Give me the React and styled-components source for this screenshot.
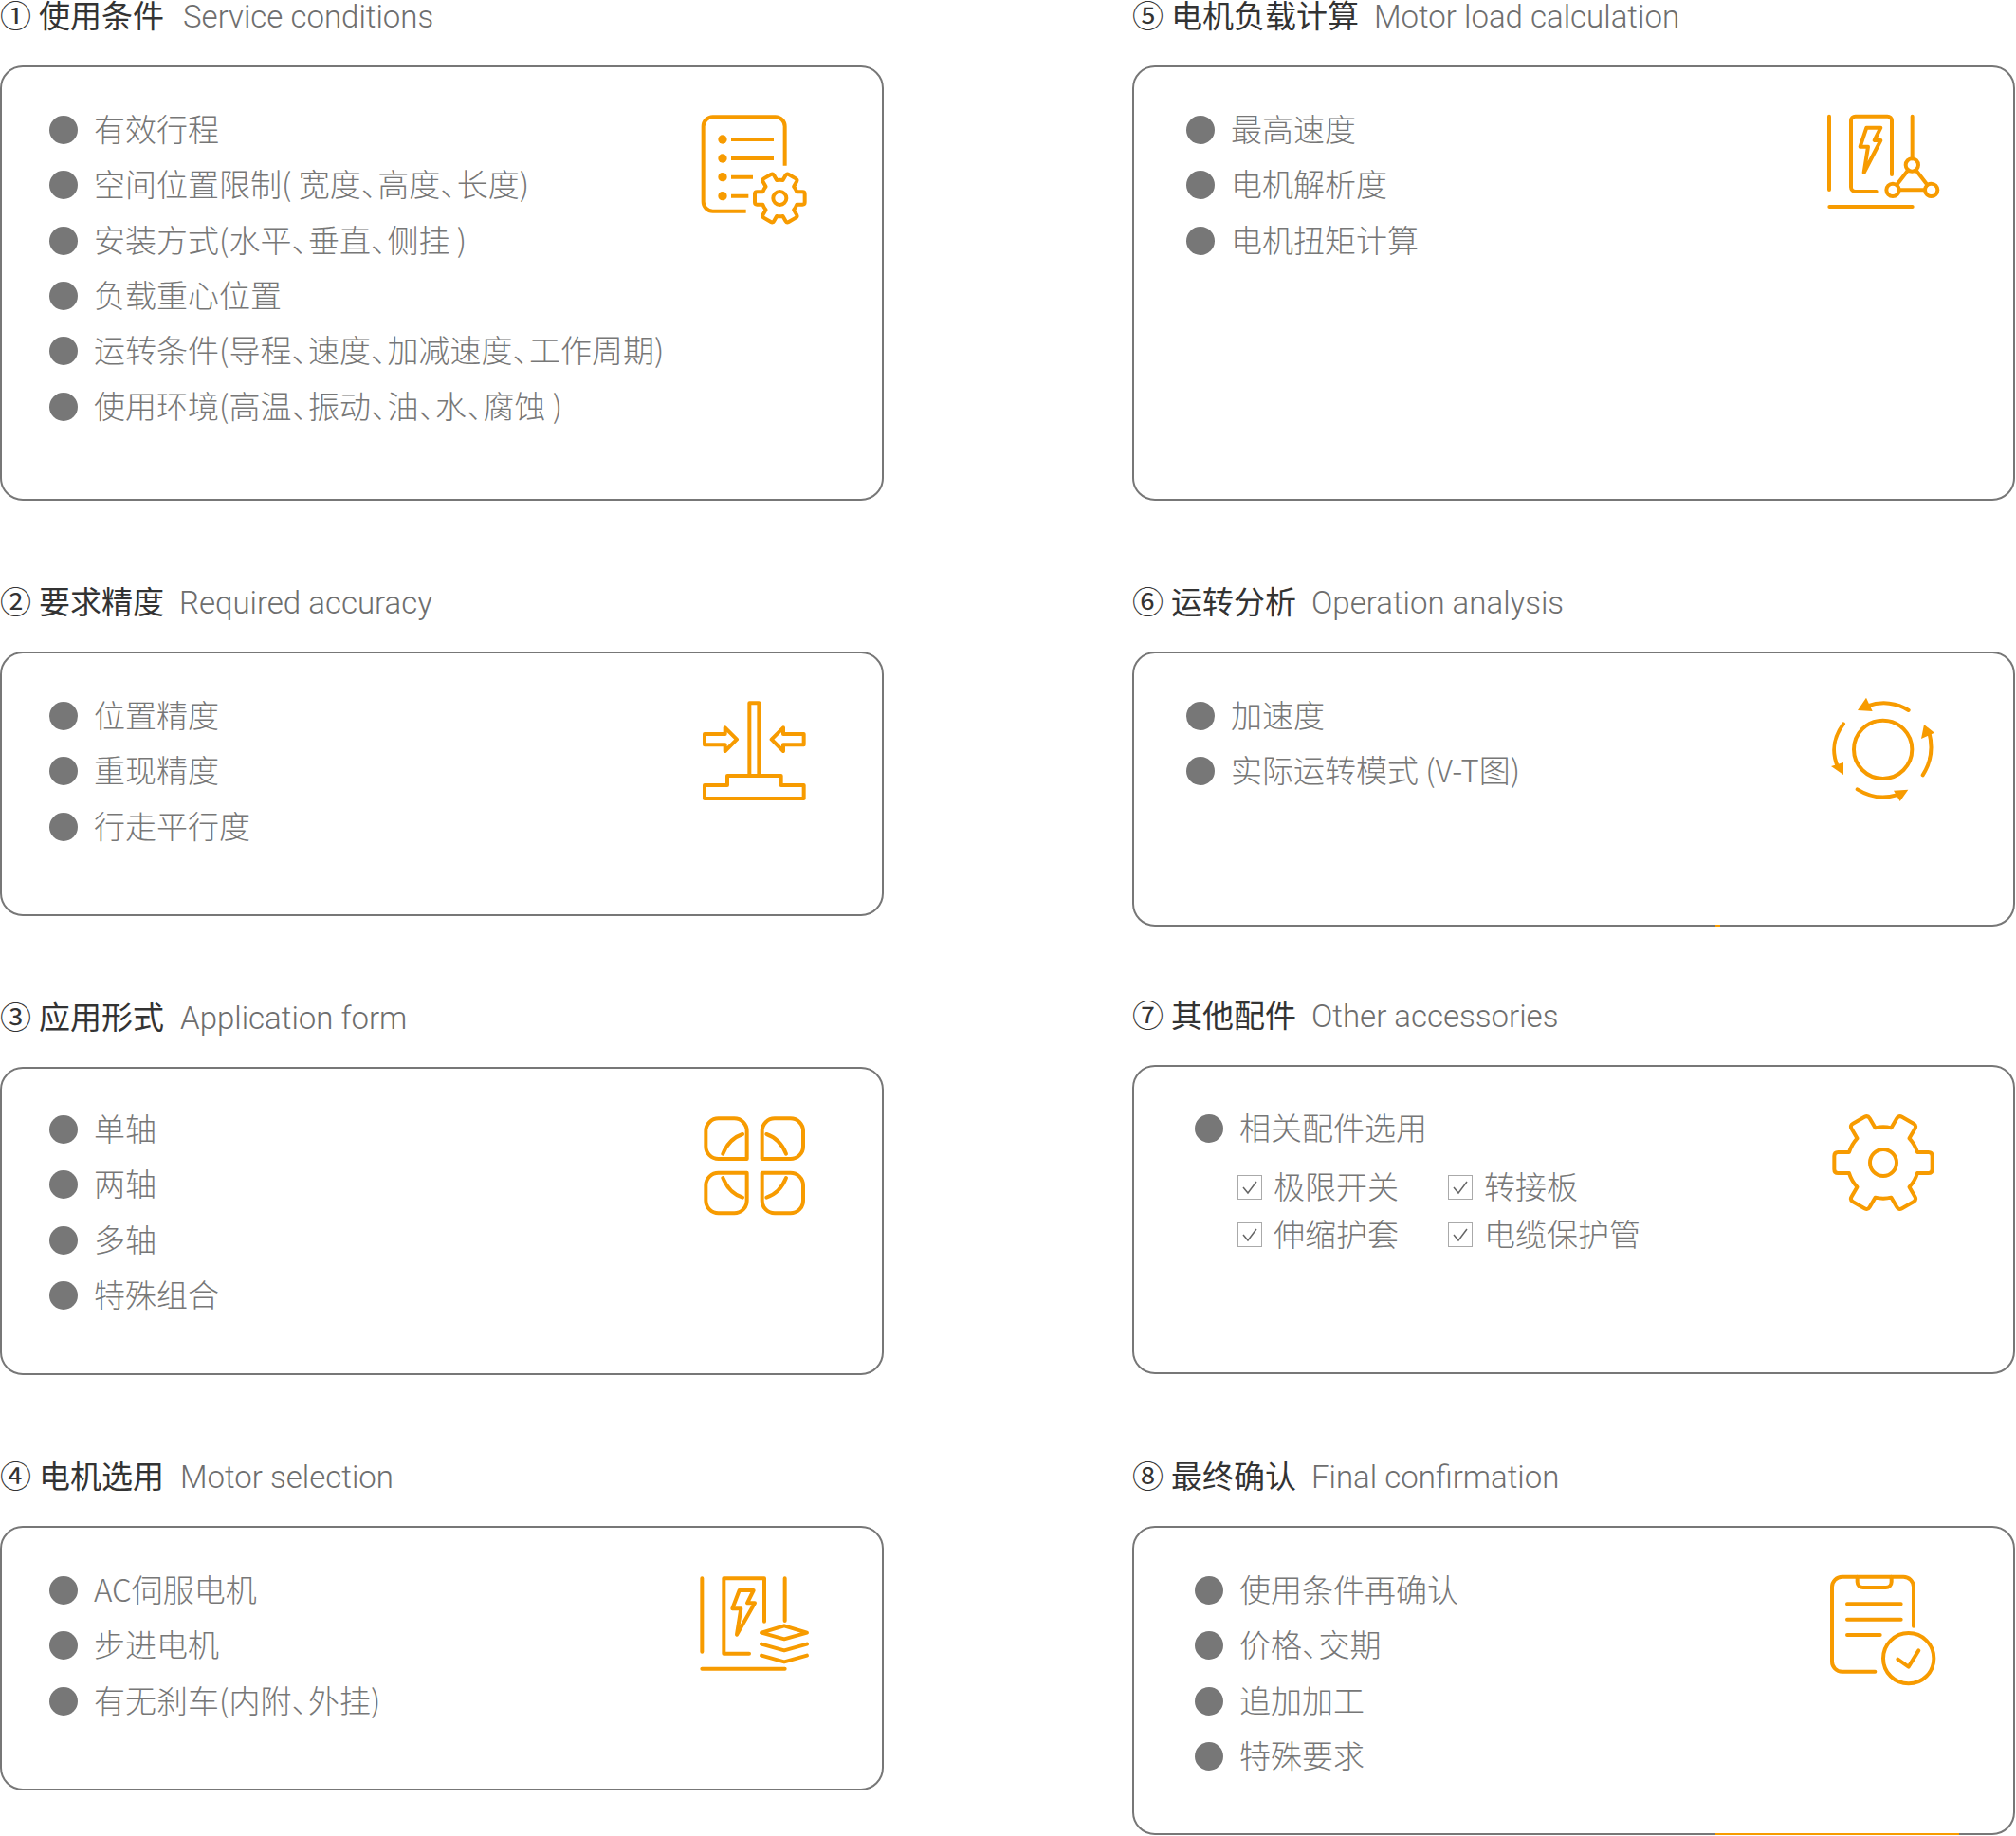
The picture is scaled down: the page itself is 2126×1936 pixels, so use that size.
import React from 'react';
import styled, { createGlobalStyle } from 'styled-components';

const ORANGE = '#f79b00';

const GlobalStyle = createGlobalStyle`
  html, body {
    margin: 0;
    padding: 0;
    background: #fff;
  }
  body {
    font-family: "Noto Sans CJK SC", "Noto Sans", sans-serif;
  }
`;

const Page = styled.div`
  width: 2126px;
  height: 1936px;
  overflow: hidden;
  display: grid;
  grid-template-columns: 932px 931px;
  column-gap: 262px;
  align-content: start;
`;

const Column = styled.div`
  display: flex;
  flex-direction: column;
`;

const Section = styled.section`
  margin-top: ${(props) => props.$gap || 0}px;
`;

const Title = styled.h2`
  display: flex;
  align-items: center;
  height: 32px;
  margin: 0 0 37px;
  font-weight: 400;
  font-size: 33px;
  white-space: nowrap;
`;

const Num = styled.span`
  width: 41px;
  flex: none;
  margin-top: -3px;
  color: #333;
`;

const Zh = styled.span`
  margin-top: -3px;
  color: #333;
`;

const En = styled.span`
  margin: 2px 0 0 ${(props) => props.$gap || 16}px;
  color: #6e6e6e;
  font-family: Roboto, sans-serif;
  font-weight: 300;
  font-size: 33px;
`;

const Card = styled.div`
  position: relative;
  display: flex;
  justify-content: space-between;
  align-items: flex-start;
  height: ${(props) => props.$height}px;
  box-sizing: border-box;
  border: 2px solid #777;
  border-radius: 24px;
  background: #fff;
`;

const Accent = styled.span`
  position: absolute;
  left: 613px;
  bottom: -2px;
  width: ${(props) => props.$width}px;
  height: 2px;
  background: ${ORANGE};
`;

const List = styled.ul`
  flex: 1;
  min-width: 0;
  margin: 0;
  padding: ${(props) => props.$top || 37}px 0 0 ${(props) => props.$left || 50}px;
  list-style: none;
`;

const Item = styled.li`
  display: flex;
  align-items: center;
  height: 58.3px;
  color: #777;
  font-size: 33px;
  font-weight: 300;
  white-space: nowrap;
`;

const Dot = styled.span`
  width: 30px;
  height: 30px;
  flex: none;
  margin-right: 17px;
  border-radius: 50%;
  background: #777;
`;

const ItemText = styled.span`
  margin-top: -4px;
`;

const Pause = styled.span`
  letter-spacing: -15.5px;
`;

const Checks = styled.div`
  display: grid;
  grid-template-columns: 222px auto;
  grid-auto-rows: 50px;
  margin: 8px 0 0 45px;
`;

const Check = styled.div`
  display: flex;
  align-items: center;
  gap: 12px;
  color: #777;
  font-size: 33px;
  font-weight: 300;
  white-space: nowrap;
`;

const Box = styled.span`
  display: flex;
  align-items: center;
  justify-content: center;
  width: 26px;
  height: 26px;
  flex: none;
  box-sizing: border-box;
  border: 1.5px solid #aaa;
`;

const Icon = styled.svg`
  flex: none;
  margin: ${(props) => props.$top}px ${(props) => props.$right}px 0 0;
  fill: none;
  stroke: ${ORANGE};
  stroke-width: 12;
  stroke-linecap: round;
  stroke-linejoin: round;
`;

// square teeth with eased corners, arcs between them
const gearPath = (cx, cy, outer, base, halfWidth, valley, corner) => {
  let d = '';
  for (let i = 0; i < 6; i++) {
    const a = (i * Math.PI) / 3;
    const u = [Math.cos(a), Math.sin(a)];
    const v = [-u[1], u[0]];
    const p = (along, across) =>
      `${(cx + u[0] * along + v[0] * across).toFixed(1)} ${(cy + u[1] * along + v[1] * across).toFixed(1)}`;
    d += i === 0 ? `M${p(base, -halfWidth)} ` : `A${valley} ${valley} 0 0 1 ${p(base, -halfWidth)} `;
    d += `L${p(outer - corner, -halfWidth)} Q${p(outer, -halfWidth)} ${p(outer, -halfWidth + corner)} `;
    d += `L${p(outer, halfWidth - corner)} Q${p(outer, halfWidth)} ${p(outer - corner, halfWidth)} `;
    d += `L${p(base, halfWidth)} `;
  }
  return `${d}A${valley} ${valley} 0 0 1 ${(cx + base).toFixed(1)} ${(cy - halfWidth).toFixed(1)} Z`;
};

const ListGearIcon = () => (
  <Icon width="180" height="160" viewBox="0 0 540 480" $top={29} $right={49}>
    <path strokeLinecap="butt" d="M380 224V100a30 30 0 0 0-30-30H152a30 30 0 0 0-30 30v238a30 30 0 0 0 30 30h105" />
    <path strokeLinecap="butt" d="M210 141h135M210 201h135M210 260h69M210 320h55" />
    <circle cx="183" cy="141" r="14" fill={ORANGE} stroke="none" />
    <circle cx="183" cy="201" r="14" fill={ORANGE} stroke="none" />
    <circle cx="183" cy="260" r="14" fill={ORANGE} stroke="none" />
    <circle cx="183" cy="320" r="14" fill={ORANGE} stroke="none" />
    <path d={gearPath(364, 327, 79, 54, 20, 58, 7)} />
    <circle cx="364" cy="327" r="21" />
  </Icon>
);

const MotorTriangleIcon = () => (
  <Icon width="180" height="140" viewBox="0 0 540 420" $top={29} $right={43}>
    <path d="M87 68v232M88 354h262M350 68v134" />
    <path d="M285 252V82a14 14 0 0 0-14-14H170a14 14 0 0 0-14 14v210a14 14 0 0 0 14 14h66" />
    <path d="M205 104h45l-20 40h20l-53 102 13-82h-25z" />
    <circle cx="349" cy="222" r="20" />
    <circle cx="288" cy="301" r="20" />
    <circle cx="410" cy="301" r="20" />
    <path d="M337 238l-36 46M361 238l36 46M308 301h82" />
  </Icon>
);

const AccuracyIcon = () => (
  <Icon width="180" height="140" viewBox="0 0 540 420" $top={31} $right={49}>
    <path d="M268 64h30v230h-30zM126 366v-42h72v-30h170v30h72v42z" />
    <path d="M126 162h65v-20l37 37-37 37v-20h-65zM440 162h-65v-20l-37 37 37 37v-20h65z" />
  </Icon>
);

const RotationIcon = () => (
  <Icon width="180" height="140" viewBox="0 0 540 420" $top={31} $right={43}>
    <circle cx="257" cy="211" r="92" />
    <path d="M338 87c-36-24-84-30-130-14M132 130c-34 46-38 88-18 136M176 337c42 26 84 30 124 18M383 292c30-46 32-90 20-136" />
    <path fill={ORANGE} stroke="none" d="M204 47l20 43-47-3zM387 132l33 26-42 19zM93 264l39-12v39zM337 338l-26 37-20-34z" />
  </Icon>
);

const QuadIcon = () => (
  <Icon width="160" height="130" viewBox="0 0 480 390" $top={33} $right={49}>
    <path d="M110 58h50a40 40 0 0 1 40 40v88h-90a40 40 0 0 1-40-40v-48a40 40 0 0 1 40-40z" />
    <path d="M124 170c12-30 32-52 62-62" />
    <path d="M288 58h50a40 40 0 0 1 40 40v48a40 40 0 0 1-40 40h-90V98a40 40 0 0 1 40-40z" />
    <path d="M262 108c30 10 50 32 62 62" />
    <path d="M110 230h90v88a40 40 0 0 1-40 40h-50a40 40 0 0 1-40-40v-48a40 40 0 0 1 40-40z" />
    <path d="M124 246c12 30 32 52 62 62" />
    <path d="M248 230h90a40 40 0 0 1 40 40v48a40 40 0 0 1-40 40h-50a40 40 0 0 1-40-40z" />
    <path d="M324 246c-12 30-32 52-62 62" />
  </Icon>
);

const GearIcon = () => (
  <Icon width="160" height="130" viewBox="0 0 480 390" $top={35} $right={53}>
    <path d={gearPath(228, 198, 155, 108, 33, 113, 12)} />
    <circle cx="228" cy="198" r="42" />
  </Icon>
);

const MotorStackIcon = () => (
  <Icon width="160" height="130" viewBox="0 0 480 390" $top={40} $right={49}>
    <path d="M58 40v232M58 326h262M320 40v134" />
    <path d="M255 176V40H127v238h80" />
    <path d="M176 78h45l-20 40h24l-57 100 13-82h-27z" />
    <path d="M246 212l72-22 72 22-72 20zM246 248l72 20 72-20M246 284l72 20 72-20" />
  </Icon>
);

const ClipboardIcon = () => (
  <Icon width="160" height="140" viewBox="0 0 480 420" $top={39} $right={53}>
    <path d="M324 194V70a32 32 0 0 0-32-32H98a32 32 0 0 0-32 32v236a32 32 0 0 0 32 32h104" />
    <path d="M146 38v16a18 18 0 0 0 18 18h72a18 18 0 0 0 18-18V38" />
    <path d="M114 124h170M114 173h170M114 222h104" />
    <circle cx="308" cy="296" r="80" />
    <path d="M274 299l34 24 32-52" />
  </Icon>
);

const CheckMark = () => (
  <svg width="18" height="16" viewBox="0 0 18 16" fill="none" stroke="#666" strokeWidth="1.5">
    <path d="M2 8l5 6 9-12" />
  </svg>
);

// the source sets 、 half width
const withPauses = (text) =>
  text.split('、').map((part, i) => (
    <React.Fragment key={part}>
      {i > 0 && <Pause>、</Pause>}
      {part}
    </React.Fragment>
  ));

const leftColumn = [
  {
    num: '①', zh: '使用条件', en: 'Service conditions', enGap: 20, height: 459, gap: 0,
    items: ['有效行程', '空间位置限制( 宽度、高度、长度)', '安装方式(水平、垂直、侧挂 )', '负载重心位置', '运转条件(导程、速度、加减速度、工作周期)', '使用环境(高温、振动、油、水、腐蚀 )'],
    icon: <ListGearIcon />,
  },
  {
    num: '②', zh: '要求精度', en: 'Required accuracy', height: 279, gap: 90,
    items: ['位置精度', '重现精度', '行走平行度'],
    icon: <AccuracyIcon />,
  },
  {
    num: '③', zh: '应用形式', en: 'Application form', enGap: 17, height: 325, gap: 90,
    items: ['单轴', '两轴', '多轴', '特殊组合'],
    top: 35,
    icon: <QuadIcon />,
  },
  {
    num: '④', zh: '电机选用', en: 'Motor selection', enGap: 17, height: 279, gap: 90,
    items: ['AC伺服电机', '步进电机', '有无刹车(内附、外挂)'],
    icon: <MotorStackIcon />,
  },
];

const rightColumn = [
  {
    num: '⑤', zh: '电机负载计算', en: 'Motor load calculation', height: 459, gap: 0, left: 55,
    items: ['最高速度', '电机解析度', '电机扭矩计算'],
    icon: <MotorTriangleIcon />,
  },
  {
    num: '⑥', zh: '运转分析', en: 'Operation analysis', height: 290, gap: 90, left: 55, accent: 5,
    items: ['加速度', '实际运转模式 (V-T图)'],
    icon: <RotationIcon />,
  },
  {
    num: '⑦', zh: '其他配件', en: 'Other accessories', height: 326, gap: 77, left: 64, top: 36,
    items: ['相关配件选用'],
    checks: ['极限开关', '转接板', '伸缩护套', '电缆保护管'],
    icon: <GearIcon />,
  },
  {
    num: '⑧', zh: '最终确认', en: 'Final confirmation', height: 326, gap: 91, left: 64, top: 37, accent: 257,
    items: ['使用条件再确认', '价格、交期', '追加加工', '特殊要求'],
    icon: <ClipboardIcon />,
  },
];

const Block = ({ data }) => (
  <Section $gap={data.gap}>
    <Title>
      <Num>{data.num}</Num>
      <Zh>{data.zh}</Zh>
      <En $gap={data.enGap}>{data.en}</En>
    </Title>
    <Card $height={data.height}>
      <List $top={data.top} $left={data.left}>
        {data.items.map((text) => (
          <Item key={text}>
            <Dot />
            <ItemText>{withPauses(text)}</ItemText>
          </Item>
        ))}
        {data.checks && (
          <Checks>
            {data.checks.map((text) => (
              <Check key={text}>
                <Box>
                  <CheckMark />
                </Box>
                <ItemText>{text}</ItemText>
              </Check>
            ))}
          </Checks>
        )}
      </List>
      {data.icon}
      {data.accent && <Accent $width={data.accent} />}
    </Card>
  </Section>
);

export default function App() {
  return (
    <Page>
      <GlobalStyle />
      <Column>
        {leftColumn.map((data) => (
          <Block key={data.num} data={data} />
        ))}
      </Column>
      <Column>
        {rightColumn.map((data) => (
          <Block key={data.num} data={data} />
        ))}
      </Column>
    </Page>
  );
}
